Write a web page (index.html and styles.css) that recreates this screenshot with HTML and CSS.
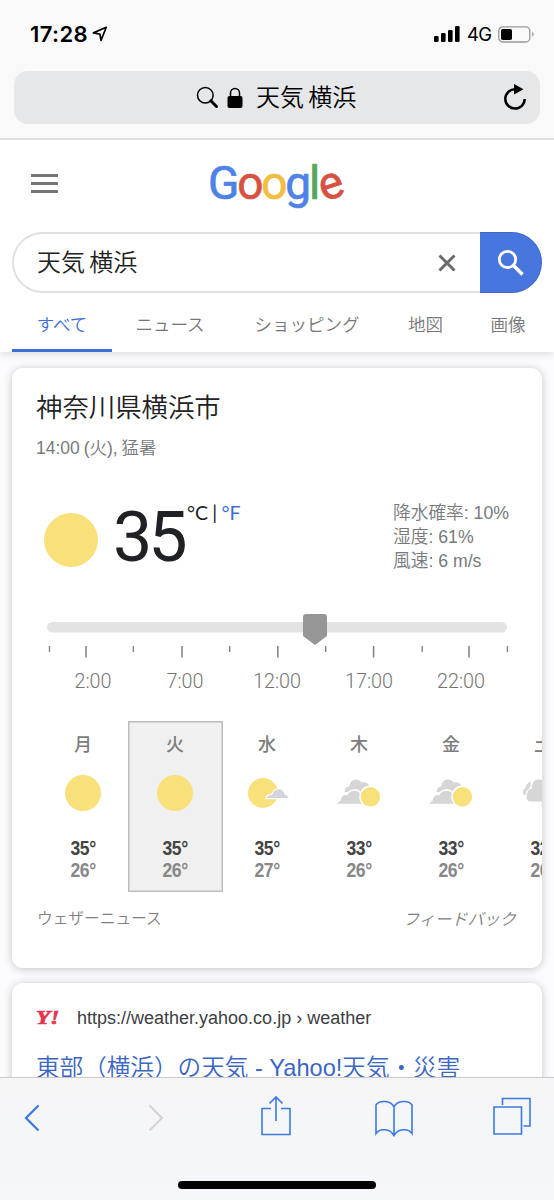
FILE: index.html
```html
<!DOCTYPE html>
<html lang="ja">
<head>
<meta charset="utf-8">
<meta name="viewport" content="width=device-width">
<title>天気 横浜</title>
<link rel="stylesheet" href="styles.css">
</head>
<body>
<div class="phone">
  <header class="browser-top">
    <div class="status">
      <span class="clock">17:28</span>
      <svg class="locate" width="16" height="16" viewBox="0 0 16 16"><path d="M1.400 6.900 14.300 1.300 9 14.400 7.900 8.100Z" fill="none" stroke="#000" stroke-width="1.700" stroke-linejoin="round"/></svg>
      <svg class="signal" width="26" height="16" viewBox="0 0 26 16"><rect x="0" y="10" width="4.600" height="6" rx="1.200"/><rect x="7" y="7" width="4.600" height="9" rx="1.200"/><rect x="14" y="4" width="4.600" height="12" rx="1.200"/><rect x="21" y="0" width="4.600" height="16" rx="1.200"/></svg>
      <span class="network">4G</span>
      <svg class="battery" width="37" height="17" viewBox="0 0 37 17"><rect x=".8" y=".8" width="31" height="15.200" rx="4" fill="none" stroke="#999" stroke-width="1.300"/><rect x="3" y="3" width="11" height="11" rx="1.800"/><path d="M34.200 5.800v5c2-1 2-4 0-5Z" fill="#999"/></svg>
    </div>
    <div class="address">
      <svg width="23" height="23" viewBox="0 0 23 23" fill="none" stroke="#000"><circle cx="9.300" cy="9.300" r="7.800" stroke-width="1.500"/><path d="m14.800 14.800 5.700 5.700" stroke-width="3" stroke-linecap="round"/></svg>
      <svg class="lock" width="16" height="21" viewBox="0 0 16 21"><rect x=".5" y="9" width="15" height="12" rx="2"/><path d="M3.500 10V6a4.500 4.500 0 0 1 9 0v4" fill="none" stroke="#000" stroke-width="1.500"/></svg>
      <span class="address-text">天気 横浜</span>
      <svg class="reload" width="24" height="27" viewBox="0 0 24 27"><path d="M12 5.200A9.700 9.700 0 1 0 21.700 15" fill="none" stroke="#000" stroke-width="2.500"/><path d="M11 0 20.500 5.300 11 10.500Z"/></svg>
    </div>
  </header>

  <main class="page">
    <section class="search-head">
      <div class="brand-row">
        <span class="menu"><i></i><i></i><i></i></span>
        <span class="logo"><b class="g-blue">G</b><b class="g-red">o</b><b class="g-yellow">o</b><b class="g-blue">g</b><b class="g-green">l</b><b class="g-red e">e</b></span>
      </div>
      <div class="search-box">
        <span class="query">天気 横浜</span>
        <svg class="clear" width="18" height="18" viewBox="0 0 18 18"><path d="m1.500 1.500 15 15M16.500 1.500l-15 15" stroke="#6b6b6b" stroke-width="3"/></svg>
        <span class="search-button"><svg width="28" height="28" viewBox="0 0 28 28" fill="none" stroke="#fff"><circle cx="10.500" cy="10.500" r="8.200" stroke-width="2.800"/><path d="m16.500 16.500 9 9" stroke-width="3.600"/></svg></span>
      </div>
      <nav class="tabs">
        <span class="tab active">すべて</span><span class="tab news">ニュース</span><span class="tab shopping">ショッピング</span><span class="tab maps">地図</span><span class="tab images">画像</span>
      </nav>
    </section>

    <section class="card weather">
      <h1>神奈川県横浜市</h1>
      <p class="when">14:00 (火), 猛暑</p>
      <div class="now">
        <span class="sun big"></span>
        <span class="degrees">35</span>
        <span class="units">°C | <a>°F</a></span>
        <div class="facts"><div>降水確率: 10%</div><div>湿度: 61%</div><div>風速: 6 m/s</div></div>
      </div>
      <div class="slider">
        <svg width="464" height="46" viewBox="0 0 464 46"><rect x="1" y="10" width="460" height="10.500" rx="5.200" fill="#e3e3e3"/><path d="M257 5a3 3 0 0 1 3-3h18a3 3 0 0 1 3 3v19l-12 9-12-9Z" fill="#969696"/><g stroke="#858585" stroke-width="1.400"><path d="M3.500 34v6M87.300 34v6M183.700 34v6M279.700 34v6M376.200 34v6M461.400 34v6"/><path d="M40 34v11.500M136 34v11.500M231.800 34v11.500M327.600 34v11.500M423 34v11.500" stroke-width="1.600"/></g></svg>
        <div class="hours"><span>2:00</span><span>7:00</span><span>12:00</span><span>17:00</span><span>22:00</span></div>
      </div>
      <div class="days">
        <div class="day"><span class="name">月</span><span class="icon"><i class="sun"></i></span><strong>35°</strong><span class="low">26°</span></div>
        <div class="day selected"><span class="name">火</span><span class="icon"><i class="sun"></i></span><strong>35°</strong><span class="low">26°</span></div>
        <div class="day"><span class="name">水</span><span class="icon"><svg width="44" height="32" viewBox="0 0 44 32"><circle cx="18" cy="16" r="15" fill="#f8e17a"/><path d="M20.500 21.700c1-3 3.300-4.400 6-4 1-3 4-6 7.500-6s5.500 2.600 6 5.400c2.500-.5 3 2.400 5.500 4.600Z" fill="#d5d4dc" stroke="#fff" stroke-width="1.300"/></svg></span><strong>35°</strong><span class="low">27°</span></div>
        <div class="day"><span class="name">木</span><span class="icon cloudy"><svg width="46" height="30" viewBox="0 0 46 30"><path d="M9.500 14c0-3.400 2-5.300 5-5.800.4-4 3-6.700 6.500-6.700 3 0 4.500 1.500 5.600 3 5-.8 7.200 1.200 8 4.500L29 14Z" fill="#d6d6d6"/><path d="M1 26.500c1.500-2 2.300-3.500 4-4 .2-3.500 2.300-6.500 7-6 1.700-3.500 5-4.700 8.300-4.500 4.500.2 7 3.500 7.700 14.500Z" fill="#d6d6d6" stroke="#fff" stroke-width="1.300"/><circle cx="35.500" cy="18.800" r="10.500" fill="#f8e17a" stroke="#fff" stroke-width="1.500"/></svg></span><strong>33°</strong><span class="low">26°</span></div>
        <div class="day"><span class="name">金</span><span class="icon cloudy"><svg width="46" height="30" viewBox="0 0 46 30"><path d="M9.500 14c0-3.400 2-5.300 5-5.800.4-4 3-6.700 6.500-6.700 3 0 4.500 1.500 5.600 3 5-.8 7.200 1.200 8 4.500L29 14Z" fill="#d6d6d6"/><path d="M1 26.500c1.500-2 2.300-3.500 4-4 .2-3.500 2.300-6.500 7-6 1.700-3.500 5-4.700 8.300-4.500 4.500.2 7 3.500 7.700 14.500Z" fill="#d6d6d6" stroke="#fff" stroke-width="1.300"/><circle cx="35.500" cy="18.800" r="10.500" fill="#f8e17a" stroke="#fff" stroke-width="1.500"/></svg></span><strong>33°</strong><span class="low">26°</span></div>
        <div class="day"><span class="name">土</span><span class="icon"><svg width="40" height="30" viewBox="0 0 40 30"><g fill="#d6d6d6"><path d="M.5 17c-1-4 0-6.500 2-7 .5-3.500 3-6 5.500-6-.5 3-.5 5-2 6.500-2 1-2.500 3-3 6Z"/><path d="M7 24c-4-1-5-5-3-9 0-3 2-4.500 4.500-4.600C8 5 11 1 15.500 1c4 0 7 2 8 6 5 0 8 3 8 8s-2 9-8 9Z" stroke="#fff"/><circle cx="20.500" cy="27" r="2"/></g></svg></span><strong>32°</strong><span class="low">26°</span></div>
      </div>
      <footer class="credits"><span>ウェザーニュース</span><em>フィードバック</em></footer>
    </section>

    <section class="card result">
      <div class="source"><span class="favicon"><b>Y!</b></span><span>https://weather.yahoo.co.jp › weather</span></div>
      <h2>東部（横浜）の天気 - Yahoo!天気・災害</h2>
    </section>
  </main>

  <footer class="toolbar">
    <div class="tools">
      <svg width="16" height="28" viewBox="0 0 16 28"><path d="M14.500 1.500 2 14l12.500 12.500" stroke-width="2.300"/></svg>
      <svg class="forward" width="16" height="28" viewBox="0 0 16 28"><path d="M1.500 1.500 14 14 1.500 26.500" stroke-width="2"/></svg>
      <svg class="share" width="30" height="42" viewBox="0 0 30 42"><path d="M10 13.500H1v26h28v-26h-9M15 26V2M8.500 8.500 15 2l6.500 6.500"/></svg>
      <svg class="book" width="38" height="37" viewBox="0 0 38 37"><path d="M19 7v28.500M1 33.500V5c3-5 15-5 18 2 3-7 15-7 18-2v28.500c-4-5.500-14-5-18 2-4-7-14-7.500-18-2Z"/></svg>
      <svg class="windows" width="38" height="38" viewBox="0 0 38 38"><path d="M1 10h27.500v27H1ZM9.500 8V1.500H37v27.500h-6.500"/></svg>
    </div>
    <div class="home"></div>
  </footer>
</div>
</body>
</html>
```
FILE: styles.css
```css
* { box-sizing: border-box; }
body { margin: 0; background: #fff; font-family: "Liberation Sans", "Noto Sans CJK JP", sans-serif; font-weight: 350; }
svg { display: block; flex: none; }
h1, h2, p { margin: 0; font-weight: 350; }
.phone { width: 554px; height: 1200px; overflow: hidden; display: flex; flex-direction: column; }

.browser-top { height: 140px; flex: none; background: #f9f9f9; border-bottom: 2px solid #dedede; }
.status { height: 71px; padding: 0 20px 3px 30px; display: flex; align-items: center; }
.clock { font: 600 22px/24px Inter, sans-serif; letter-spacing: .4px; }
.locate { margin-left: 4px; margin-top: -1px; }
.signal { margin-left: auto; }
.network { margin-left: 7px; font: 400 18.500px/24px Inter, sans-serif; width: 31px; letter-spacing: -.8px; }
.battery { margin-right: -1px; }
.address { height: 53px; margin: 0 14px; padding: 0 13px 0 182px; background: #e6e7e9; border-radius: 14px; display: flex; align-items: center; color: #000; }
.lock { margin-left: 8px; margin-top: -1px; }
.address-text { font-size: 24px; line-height: 30px; margin-left: 13px; white-space: nowrap; word-spacing: -2.500px; }
.reload { margin-left: auto; }

.page { height: 937px; flex: none; overflow: hidden; background: #fcfcfe; }
.search-head { height: 212px; background: #fff; box-shadow: 0 2px 8px rgba(60, 64, 90, .18); }
.brand-row { height: 92px; display: grid; grid-template-columns: 208px 1fr; align-items: start; }
.menu { display: grid; gap: 5px; width: 27px; margin: 34px 0 0 31px; }
.menu i { height: 3px; background: #757575; }
.logo { font: 400 46px/56px Roboto, sans-serif; letter-spacing: -2.200px; padding-top: 15px; white-space: nowrap; }
.logo b { font-weight: 400; display: inline-block; -webkit-text-stroke: .7px; }
.logo .e { transform: rotate(-18deg); }
.g-blue { color: #4f82e8; }
.g-red { color: #d65142; }
.g-yellow { color: #f2be42; }
.g-green { color: #58a55c; }
.search-box { height: 61px; margin: 0 12px; border: 2px solid #e0e0e2; border-right: 0; border-radius: 31px; display: flex; align-items: center; padding-left: 23px; }
.query { font-size: 24px; line-height: 30px; color: #222; word-spacing: -2.500px; }
.clear { margin-left: auto; margin-right: 24px; }
.search-button { width: 62px; height: 61px; margin: -2px 0; border-radius: 0 31px 31px 0; background: #4876df; border: 1px solid #4169c8; border-left: 0; display: grid; place-items: center; }
.tabs { height: 59px; display: flex; color: #777; font-size: 17.500px; padding-left: 12px; }
.tab { height: 59px; line-height: 64px; white-space: nowrap; text-align: center; }
.tab.active { width: 100px; color: #3d6ed7; border-bottom: 3px solid #3d6ed7; }
.news { width: 116px; }
.shopping { width: 158px; }
.maps { width: 79px; }
.images { width: 86px; }

.card { margin: 0 12px; background: #fff; border-radius: 11px; box-shadow: 0 1px 8px rgba(32, 33, 36, .26); overflow: hidden; }
.weather { height: 600px; margin-top: 16px; }
.weather h1 { font-size: 26.400px; line-height: 36px; color: #222; padding: 22px 24px 0; }
.when { font-size: 17.500px; line-height: 24px; color: #77797c; padding: 10px 24px 0; word-spacing: -1px; }
.now { height: 94px; margin-top: 40px; padding-left: 32px; display: flex; align-items: flex-start; }
.sun { display: block; width: 36px; height: 36px; border-radius: 50%; background: #f8e17a; }
.sun.big { width: 54px; height: 54px; margin-top: 13px; }
.degrees { font: 400 70px/80px Roboto, sans-serif; letter-spacing: -4px; color: #202124; margin-left: 15px; width: 74px; margin-top: -3px; }
.units { font: 400 19.500px/24px Lato, sans-serif; color: #202124; width: 76px; margin-top: 1px; word-spacing: -.8px; white-space: nowrap; }
.units a { color: #3d6ed7; }
.facts { margin-left: 130px; margin-top: 1px; font-size: 17.700px; line-height: 24px; color: #77797c; white-space: nowrap; }
.slider { padding-left: 34px; margin-top: 18px; }
.hours { display: grid; grid-template-columns: repeat(5, 92px); font: 300 19.800px/26px Roboto, sans-serif; color: #757575; text-align: center; margin: 11px 0 0 1px; }
.days { margin-top: 26px; padding-left: 25px; display: grid; grid-template-columns: repeat(6, 92px); }
.day { height: 171px; padding: 8px 0 0; display: flex; flex-direction: column; align-items: center; }
.day.selected { background: #f0f0f0; box-shadow: inset 0 0 0 1.500px #bcbcbc; margin: 0 -1.500px; }
.name { font: 500 18px/28px "Noto Sans CJK JP", sans-serif; color: #7c7c7c; }
.icon { height: 73px; padding-bottom: 1px; display: grid; place-items: center; }
.cloudy { margin-right: 2px; }
.day strong, .low { font: 700 19.500px/22px "Liberation Sans", sans-serif; color: #444; margin-top: 7px; letter-spacing: -.4px; transform: scaleX(.9); }
.day .low { color: #878787; margin-top: 0; }
.credits { display: flex; justify-content: space-between; color: #808080; font-size: 15.700px; line-height: 24px; padding: 15px 26px 0 25px; }
.credits em { font-size: 16.200px; }
.result { height: 160px; margin-top: 15px; }
.source { height: 53px; padding: 17px 24px 0; display: flex; align-items: center; font-size: 18px; line-height: 36px; color: #3c4043; white-space: nowrap; }
.favicon { width: 41px; flex: none; font: italic 700 18px/20px "Liberation Serif", serif; color: #e5344b; }
.favicon b { display: inline-block; transform: scaleX(1.3); transform-origin: left; -webkit-text-stroke: .7px; }
.result h2 { margin-top: 14px; padding-left: 24px; font-size: 23.600px; line-height: 36px; color: #3c66c4; white-space: nowrap; }

.toolbar { height: 123px; flex: none; background: linear-gradient(#f5f5f6, #f5f7fa); border-top: 1px solid #c9c9cb; }
.tools { height: 103px; padding: 18px 23px 0 24px; display: grid; grid-template-columns: 124px 113px 114px 118px 38px; align-items: start; }
.tools svg { fill: none; stroke: #3b7ae4; stroke-width: 1.600px; margin-top: 8px; }
.tools .forward { stroke: #d2d2d4; }
.tools .share { margin-top: -1px; }
.tools .book { margin-top: 4px; }
.tools .windows { margin-top: 1px; }
.home { width: 198px; height: 8px; border-radius: 4px; background: #000; margin: 0 auto; }
```
